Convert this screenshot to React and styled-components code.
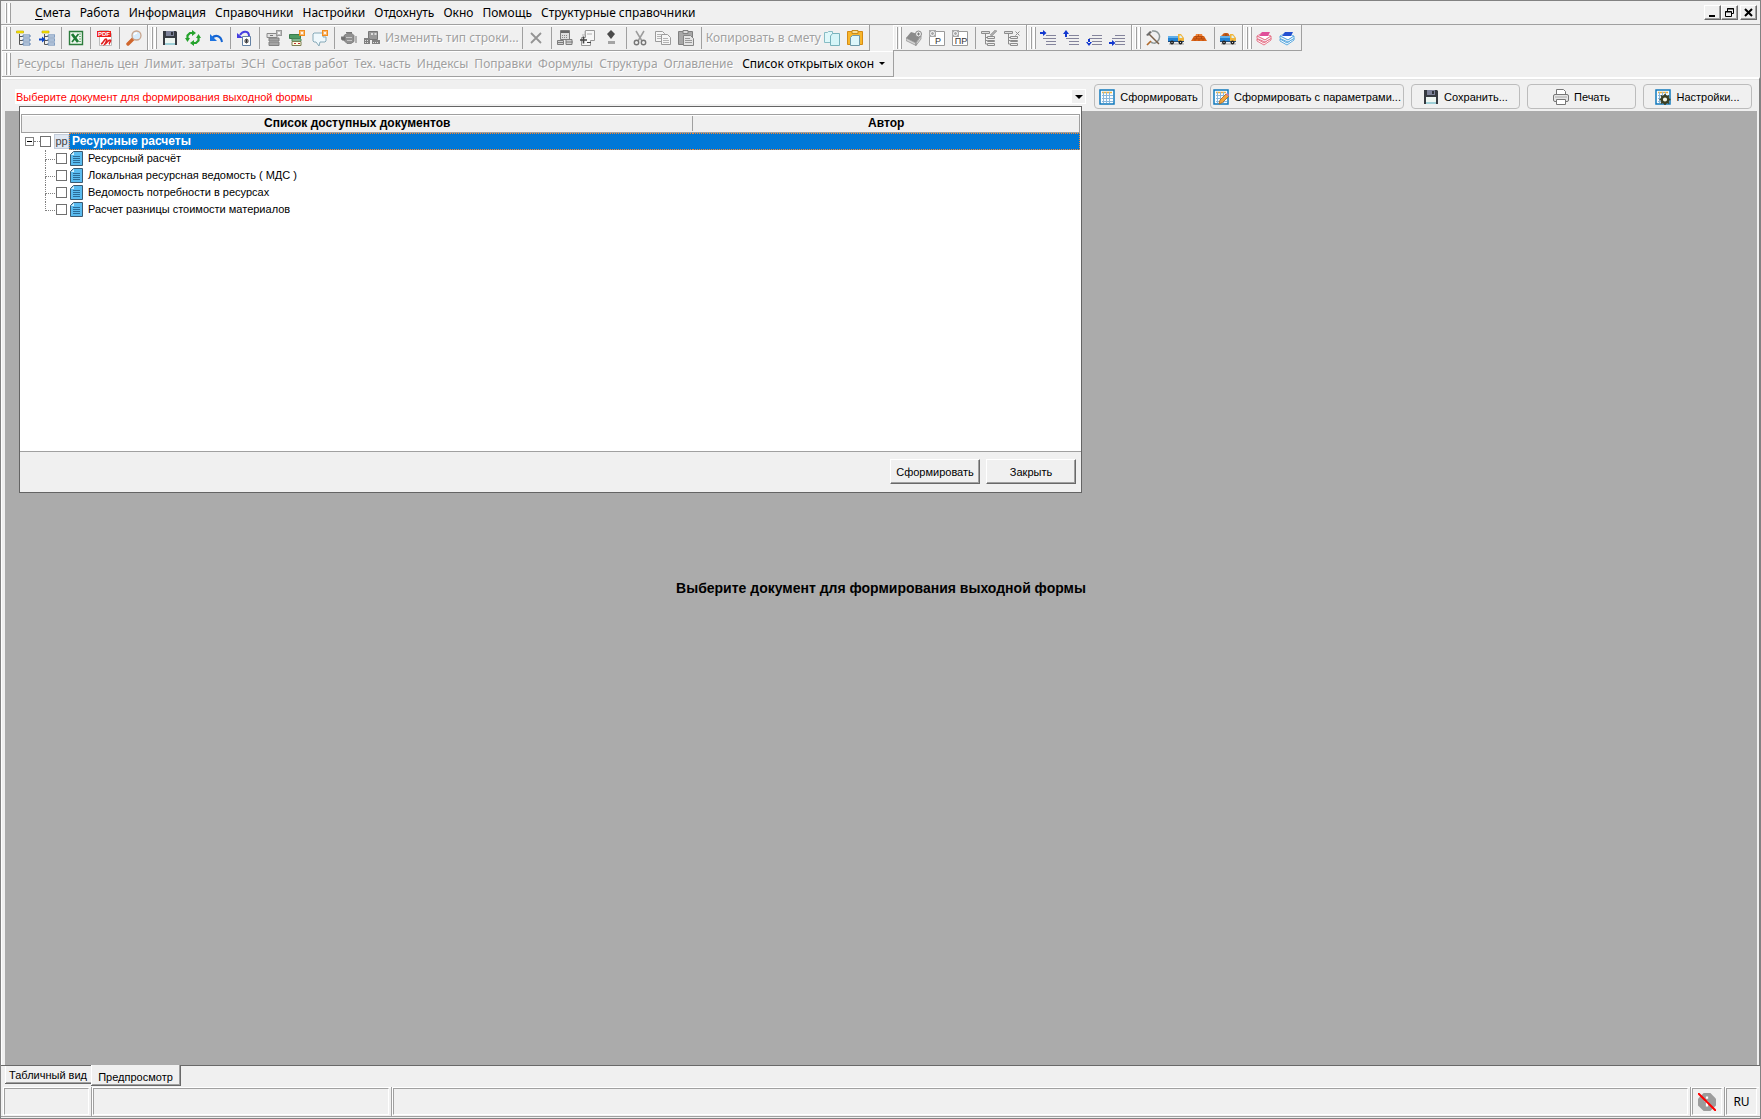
import React from 'react'
import styled, { createGlobalStyle, css } from 'styled-components'

const GlobalStyle = createGlobalStyle`
    * { box-sizing: border-box; }
    body {
        margin: 0;
        background: #f0f0f0;
        color: #000;
        font-family: 'Liberation Sans', Arial, sans-serif;
        font-size: 12px;
    }
    button, input { font: inherit; color: inherit; padding: 0; margin: 0; }
`

const menuFont = css`
    font-family: 'Noto Sans', 'Open Sans', sans-serif;
    font-size: 12px;
    line-height: 16px;
`

const Window = styled.div`
    display: flex;
    flex-direction: column;
    min-height: 100vh;
    padding-bottom: 1px;
    border: 1px solid #828282;
    background: #f0f0f0;
`

/* menu */
const MenuBar = styled.nav`
    ${menuFont}
    display: flex;
    align-items: center;
    height: 24px;
    padding: 0 3px 0 5px;
    border-bottom: 1px solid #a0a0a0;
`
const Grip = styled.span`
    width: 5px;
    align-self: stretch;
    margin: 2px 0 1px;
    border: solid #a0a0a0;
    border-width: 0 1px;
    box-shadow: -1px 0 #fff, inset -2px 0 #fff;
`
const MenuList = styled.div`
    display: flex;
    flex: 1;
    gap: 9px;
    padding-left: 24px;
`
const MenuItem = styled.button`
    border: 0;
    background: none;
    white-space: nowrap;
    u { text-underline-offset: 2px; }
`
const WindowButton = styled.button`
    display: grid;
    place-items: center;
    width: 17px;
    height: 15px;
    margin-left: ${props => (props.$apart ? '2px' : 0)};
    border: 1px solid;
    border-color: #fff #696969 #696969 #fff;
    box-shadow: inset -1px -1px #a0a0a0;
    background: #f0f0f0;
`

/* toolbars */
const ToolRow = styled.div`
    display: flex;
    height: 26px;
    padding-left: 1px;
`
const ToolGroup = styled.div`
    ${menuFont}
    display: flex;
    align-items: center;
    padding: 0 2px 0 4px;
    margin-left: ${props => (props.$apart ? '23px' : 0)};
    border: solid #a0a0a0;
    border-width: 0 1px 1px 0;
    box-shadow: inset 1px 1px #fff;
`
const ToolButton = styled.button`
    display: grid;
    place-items: center;
    width: 23px;
    height: 22px;
    border: 0;
    background: none;
    ${Grip} + & { margin-left: 1px; }
`
const TextButton = styled.button`
    border: 0;
    padding: ${props => (props.$tight ? '0 0 0 2px' : '0 3px')};
    background: none;
    white-space: nowrap;
    color: ${props => (props.disabled ? '#a0a0a0' : '#000')};
    text-shadow: ${props => (props.disabled ? '1px 1px #fff' : 'none')};
`
const Separator = styled.span`
    width: 1px;
    height: 22px;
    margin: 0 2px 0 3px;
    background: #a0a0a0;
`
const PanelLinks = styled.div`
    display: flex;
    padding: 0 3px;
    > :last-child { margin-left: 3px; }
`
const Caret = styled.span`
    display: inline-block;
    margin-left: ${props => (props.$flush ? 0 : '5px')};
    border: solid transparent;
    border-width: ${props => (props.$flush ? '4px 4px 0' : '3px 3px 0')};
    border-top-color: #000;
    vertical-align: 3px;
`

/* work area */
const Main = styled.main`
    display: flex;
    flex: 1;
    flex-direction: column;
    border-top: 2px solid #fff;
    border-right: 1px solid #808080;
    box-shadow: inset 0 1px #e3e3e3, inset 1px 0 #fff;
`
const FormBar = styled.div`
    display: flex;
    align-items: center;
    gap: 7px;
    padding: 5px 7px 2px 14px;
`
const Combo = styled.div`
    position: relative;
    display: flex;
    flex: 1;
    align-items: center;
    height: 15px;
    margin-right: 1px;
    padding-right: 1px;
    background: #fff;
    > input {
        flex: 1;
        border: 0;
        padding: 0 1px;
        background: none;
        color: #f00;
        font-size: 11px;
        outline: none;
    }
    > button {
        display: grid;
        place-items: center;
        width: 13px;
        height: 13px;
        border: 0;
        background: #f0f0f0;
    }
`
const FormButton = styled.button`
    display: flex;
    align-items: center;
    justify-content: center;
    gap: 5px;
    width: ${props => (props.$wide ? '194px' : '109px')};
    height: 25px;
    border: 1px solid #bcbcbc;
    border-radius: 4px;
    background: #f0f0f0;
    white-space: nowrap;
    font-size: 11px;
`
const Preview = styled.section`
    display: flex;
    flex: 1;
    align-items: center;
    justify-content: center;
    margin: 0 2px 0 4px;
    background: #ababab;
    font-size: 14px;
    font-weight: bold;
`

/* drop-down with documents */
const Popup = styled.div`
    position: absolute;
    z-index: 1;
    top: 17px;
    left: 4px;
    right: 4px;
    border: 1px solid #646464;
    background: #f0f0f0;
`
const ListBox = styled.div`
    height: 345px;
    padding: 7px 1px 0;
    border-bottom: 1px solid #a0a0a0;
    background: #fff;
`
const DocTable = styled.table`
    width: 100%;
    border-collapse: separate;
    border-spacing: 0;
    table-layout: fixed;
    font-size: 11px;
    th {
        height: 19px;
        padding: 0;
        border: solid #a0a0a0;
        border-width: 1px 0;
        box-shadow: inset 0 1px #fff;
        background: #f0f0f0;
        font-size: 12px;
    }
    th span {
        display: block;
        line-height: 15px;
    }
    th:first-child { width: 63.5%; border-left-width: 1px; }
    th:first-child span { border-right: 1px solid #a0a0a0; }
    th:last-child { border-right-width: 1px; }
    td { padding: 0; height: 17px; }
`
const TreeRow = styled.div`
    display: flex;
    align-items: center;
    height: 17px;
    padding-left: ${props => (props.$child ? '24px' : '4px')};
    label {
        display: flex;
        flex: 1;
        align-items: center;
        height: 17px;
        white-space: nowrap;
    }
    input {
        appearance: none;
        flex: none;
        width: 11px;
        height: 11px;
        margin-right: 3px;
        border: 1px solid #707070;
        background: #fff;
    }
`
const RowText = styled.span`
    flex: 1;
    line-height: 17px;
    padding-left: ${props => (props.$selected ? '2px' : '5px')};
    ${props => props.$selected && css`
        border: 1px dotted #ff8728;
        border-right: 0;
        line-height: 15px;
        background: #0078d7;
        color: #fff;
        font-weight: bold;
        font-size: 12px;
    `}
`
const SelectedCell = styled.td`
    border: 1px dotted #ff8728;
    border-left: 0;
    background: #0078d7;
`
const Expander = styled.button`
    display: grid;
    place-items: center;
    width: 9px;
    height: 9px;
    border: 1px solid #808080;
    background: #fff;
    &::before {
        content: '';
        width: 5px;
        height: 1px;
        background: #000;
    }
`
const Stub = styled.span`
    width: 6px;
    border-top: 1px dotted #808080;
`
const Branch = styled.span`
    width: 10px;
    height: 17px;
    margin-right: 1px;
    &::before, &::after {
        content: '';
        display: block;
        height: 8px;
        border-left: 1px dotted #808080;
    }
    &::before { height: 9px; border-bottom: 1px dotted #808080; }
    &::after { border-left-color: ${props => (props.$last ? 'transparent' : '#808080')}; }
`
const SectionMark = styled.span`
    width: 15px;
    height: 15px;
    border: 1px solid #c4ccd8;
    background: #dfe7f2;
    color: #444;
    font-size: 11px;
    line-height: 12px;
    text-align: center;
`
const PopupActions = styled.div`
    display: flex;
    justify-content: flex-end;
    gap: 6px;
    padding: 7px 5px 8px;
`
const DialogButton = styled.button`
    width: 90px;
    height: 25px;
    border: 1px solid;
    border-color: #fff #696969 #696969 #fff;
    box-shadow: inset -1px -1px #a0a0a0;
    background: #f0f0f0;
    font-size: 11px;
`

/* bottom */
const Tabs = styled.div`
    display: flex;
    align-items: flex-start;
    height: 22px;
    padding-left: 4px;
    border-top: 1px solid #696969;
`
const Tab = styled.button`
    height: ${props => (props.$active ? '21px' : '18px')};
    margin-top: ${props => (props.$active ? '-1px' : 0)};
    width: ${props => (props.$active ? '90px' : '86px')};
    border: solid #696969;
    border-width: 0 ${props => (props.$active ? '1px' : 0)} 1px 0;
    box-shadow: inset 1px 0 #fff, inset ${props => (props.$active ? '-1px' : 0)} -1px #a0a0a0;
    background: #f0f0f0;
    font-size: 11px;
    padding-top: ${props => (props.$active ? '3px' : 0)};
`
const StatusBar = styled.footer`
    ${menuFont}
    display: flex;
    height: 30px;
    padding: 0 1px 0 2px;
    border-bottom: 1px solid #a0a0a0;
`
const StatusCell = styled.div`
    flex: ${props => (props.$width ? `0 0 ${props.$width}` : '1')};
    padding: 1px;
    border-right: 1px solid #a0a0a0;
    box-shadow: inset 1px 1px #fff;
    &:last-child { border-right: 0; }
    > div {
        display: grid;
        place-items: center;
        height: 27px;
        margin-right: 1px;
        border: 1px solid;
        border-color: #a0a0a0 #fff #fff #a0a0a0;
    }
`

const Svg = ({ children, size = 16 }) => (
    <svg width={size} height={size} viewBox="0 0 16 16" fill="none" aria-hidden="true">
        {children}
    </svg>
)

const TreeLines = () => (
    <>
        <path d="M3.500 4v10.500h4M3.500 6.500h4M3.500 10.500h4" stroke="#555" />
        <path d="M7 5h7v2H7zM7 9h7v2H7zM7 13h7v2H7z" fill="#fff" stroke="#587fae" />
    </>
)
const Lines = () => <path d="M6 5.500h10M3 8.500h13M6 11.500h10M6 14.500h10" stroke="#84849c" />
const Star = ({ x = 10, color = '#f28c1c' }) => (
    <>
        <path d={`M${x} 0h6v6h-6z`} fill={color} />
        <path d={`M${x + 3} 1v4M${x + 1} 3h4M${x + 1.5} 1.500l3 3M${x + 4.5} 1.500l-3 3`} stroke="#fff" strokeWidth=".8" />
    </>
)
const GridSheet = () => (
    <>
        <path d="M1 1h14v14H1z" fill="#f8fcff" stroke="#1179bd" strokeWidth="1.500" />
        <path d="M3 3.500h10" stroke="#f2b33c" strokeWidth="1.500" />
        <path d="M4.500 3v11M7.500 3v11M10.500 3v11M3 6.500h11M3 9.500h11M3 12.500h11" stroke="#8bb8dc" />
    </>
)
const Floppy = () => (
    <>
        <path d="M1 1h13l1 1v13H1z" fill="#363a40" />
        <path d="M4 1h8v5H4z" fill="#7d8299" />
        <path d="M9 2h2v3H9z" fill="#30343c" />
        <path d="M3 8h10v7H3z" fill="#eef6f2" />
        <path d="M3 13h10v2H3z" fill="#9fd0d8" />
    </>
)
const Truck = () => (
    <>
        <path d="M1 14h15" stroke="#c9c9c9" strokeWidth="2" />
        <path d="M0 6h10v6H0z" fill="#2382d2" />
        <path d="M0 6h10v2H0z" fill="#62b0ea" />
        <path d="M0 11h16v1H0z" fill="#234c78" />
        <path d="M10 4h3l3 4v3h-6z" fill="#f1b43a" />
        <path d="M11.500 5.500h1.500l1.500 2.500h-3z" fill="#d8f1fb" />
        <circle cx="4" cy="12.500" r="2" fill="#222" />
        <circle cx="12.500" cy="12.500" r="2" fill="#222" />
        <path d="M3.500 12.500h1M12 12.500h1" stroke="#ddd" />
    </>
)
const Bricks = () => (
    <>
        <path d="M5 4h6l1 3H4z" fill="#ee8238" />
        <path d="M3 6h10l3 5H0z" fill="#dd6417" />
        <path d="M4 6.500h8M2 8.800h12M7.500 4.500v2M5.500 7v2M10.500 7v2M4 9v2M8 9v2M12 9v2" stroke="#a8450c" strokeWidth=".7" />
    </>
)
const Books = ({ top, side }) => (
    <>
        <path d="M1 9l7 4 7-5v2l-7 5-7-4z" fill="#fff" stroke={side} strokeWidth=".9" />
        <path d="M1 6l5-3 9 3-6 4z" fill="#fff" stroke={side} strokeWidth=".7" />
        <path d="M1 6l8 4 6-4v2.500L9 12 1 8.500z" fill="#f4f7fb" stroke={side} strokeWidth=".9" />
        <path d="M6 2h8l-2 4H3z" fill={top} />
    </>
)
const Filter = () => (
    <>
        <path d="M.5 1.500h8v2h-8z" fill="#ddd" stroke="#8c8c8c" />
        <path d="M4.500 4v10h2M4.500 7.500h2M4.500 10.500h2" stroke="#8c8c8c" />
        <path d="M6.500 6.500h7v2h-7zM6.500 10.500h7v1h-7zM6.500 13.500h7v2h-7z" fill="#eee" stroke="#8c8c8c" />
    </>
)
const Gear = () => (
    <>
        <circle cx="10" cy="10.500" r="3.300" stroke="#3c3f22" strokeWidth="2.400" fill="#f6f6e8" />
        <path d="M10 5v2M10 14v2M4.500 10.500h2M13.500 10.500h2M6 6.500l1.500 1.500M12.500 13l1.500 1.500M14 6.500L12.500 8M7.500 13L6 14.500" stroke="#3c3f22" strokeWidth="1.600" />
    </>
)
const Sheet = ({ code }) => (
    <>
        <path d="M.5 1.500h15v14H.5z" fill="#fff" stroke="#9a9a9a" />
        <path d="M0 0h7v7H0z" fill="#aaa" />
        <circle cx="3.500" cy="3.500" r="2" stroke="#fff" />
        <text x="9" y="13.500" fontSize="9" fontFamily="Liberation Sans, sans-serif" textAnchor="middle" fill="#333">{code}</text>
    </>
)

const icons = {
    tree: <><TreeLines /><path d="M.5 1h7v2h-7z" fill="#ffe800" stroke="#b8a400" strokeWidth=".6" /></>,
    treeInsert: (
        <>
            <g transform="translate(2 0)"><TreeLines /><path d="M1 1h7v2H1z" fill="#ffe800" stroke="#b8a400" strokeWidth=".6" /></g>
            <path d="M0 9.500h4" stroke="#0b46c8" strokeWidth="2" />
            <path d="M3 6.500l3.500 3-3.500 3z" fill="#0b46c8" />
        </>
    ),
    excel: (
        <>
            <path d="M1.500 1.500h13v13h-13z" fill="#eef7ee" stroke="#2c7c3c" strokeWidth="1.400" />
            <path d="M11 4h2M11 6.500h2M11 9h2M11 11.500h2" stroke="#6fb07a" />
            <path d="M4 4l6 8" stroke="#1d7a33" strokeWidth="2.800" />
            <path d="M10.500 4l-6.500 8" stroke="#1d7a33" strokeWidth="1.700" />
        </>
    ),
    pdf: (
        <>
            <path d="M2.500.5h9l3 3v12h-12z" fill="#fff" stroke="#bdbdbd" />
            <path d="M0 1h14v6H0z" fill="#ee1c1c" />
            <text x="7" y="6.200" fontSize="6" fontWeight="bold" fontFamily="Liberation Sans, sans-serif" textAnchor="middle" fill="#fff">PDF</text>
            <path d="M4 14c3-1 3-5 5-5s-1 5-1 5c2-1 3-4 5-4s-2 4 0 4" stroke="#e02222" strokeWidth="1.600" />
        </>
    ),
    lens: (
        <>
            <path d="M2 14l5-5" stroke="#d0662c" strokeWidth="3.400" strokeLinecap="round" />
            <circle cx="10.500" cy="5.500" r="4.500" fill="#d8ecfb" stroke="#c8a48c" strokeWidth="1.300" />
            <path d="M8 5c.5-1.500 1.500-2 3-2" stroke="#fff" strokeWidth="1.300" />
        </>
    ),
    save: <Floppy />,
    refresh: (
        <>
            <path d="M2.500 9.500v-4L5 3h3M13.500 6.500v4L11 13H8" stroke="#25a32c" strokeWidth="2.200" />
            <path d="M7 0l4 3-4 3zM9 10l-4 3 4 3z" fill="#25a32c" />
            <path d="M0 8l2.500 4L5 8zM16 8l-2.500-4L11 8z" fill="#25a32c" />
        </>
    ),
    undo: (
        <>
            <path d="M4 8c4-4 9-2 10 4" stroke="#1464d2" strokeWidth="2" />
            <path d="M2 4v7h7z" fill="#1d73e0" />
        </>
    ),
    undoDoc: (
        <>
            <path d="M3 5c3-5 9-4 9 1" stroke="#463fe0" strokeWidth="2" />
            <path d="M0 3v5h6z" fill="#463fe0" />
            <path d="M5.500 6.500h8v9h-8z" fill="#fff" stroke="#6582a4" />
            <path d="M9.500 8.500v5M7 11h5M8 9l3 4M11 9l-3 4" stroke="#222" strokeWidth=".8" />
        </>
    ),
    stackGray: (
        <>
            <path d="M1 3.500h10v4H1z" fill="#e2e2e2" stroke="#8a8a8a" />
            <path d="M3 8h10v3H3zM3 12h10v3.500H3z" fill="#a4a4a4" stroke="#808080" />
            <path d="M4 5.500h3" stroke="#777" />
            <Star color="#9a9a9a" />
        </>
    ),
    stackGreen: (
        <>
            <path d="M.5 4.500h11v4H.5z" fill="#4e9b62" stroke="#3a7b4c" />
            <path d="M3 9h9v2H3z" fill="#b8dcc0" stroke="#4d8c5c" />
            <path d="M3 11.500h9v4H3z" fill="#fffde2" stroke="#7c7c50" />
            <path d="M5 13.500h2M9 13.500h2" stroke="#c03030" />
            <Star />
        </>
    ),
    bubble: (
        <>
            <path d="M2 3h9v4h3v4l-1 1H8l-1 4-3-4H2L1 11V4z" fill="#eff8fc" stroke="#86a9b8" />
            <Star />
        </>
    ),
    engine: (
        <>
            <path d="M3 5.500l3-2h5l2 2v6l-3 2H6l-3-3z" fill="#909090" stroke="#777" strokeWidth=".8" />
            <path d="M0 7h4v3H1zM15 6v7M5 2.500h6" fill="#6f6f6f" stroke="#777" />
            <path d="M5 7.500h6M6 10.500h5" stroke="#d6d6d6" strokeWidth=".8" />
        </>
    ),
    machines: (
        <>
            <path d="M4.500 1.500h9v8h-9z" fill="#999" stroke="#777" />
            <path d="M7 3h2v2H7zM10.500 3h2v2h-2z" fill="#ddd" />
            <path d="M0 8h6v6H0zM8 10h8v4H8z" fill="#808080" />
            <path d="M1 10.500h4M9 12.500h6M1 12.500h4" stroke="#ddd" strokeDasharray="1 1" />
        </>
    ),
    cross: <path d="M3 3l10 10M13 3L3 13" stroke="#949494" strokeWidth="1.800" />,
    calc: (
        <>
            <path d="M3.500.5h9v9h-9z" fill="#ddd" stroke="#7d7d7d" />
            <path d="M4 2h8" stroke="#666" strokeWidth="2" />
            <path d="M5 5.500h6M5 7.500h6" stroke="#888" strokeDasharray="1 1" />
            <path d="M.5 10.500h6v4h-6zM9 9.500h6v5H9z" fill="#d0d0d0" stroke="#7d7d7d" />
            <path d="M0 12.500h7M9 12h7" stroke="#7d7d7d" />
        </>
    ),
    docPlus: (
        <>
            <path d="M5.500.5h9v10h-4v5h-9v-8h4z" fill="#f7f7f7" stroke="#989898" />
            <path d="M7 4h5M5 1v4H2" stroke="#b0b0b0" />
            <path d="M0 10h7M3.500 6.500v7" stroke="#444" strokeWidth="1.600" />
            <path d="M7 12.500h4" stroke="#444" />
        </>
    ),
    plusMinus: (
        <>
            <path d="M8 0l4 4-4 5-4-5z" fill="#4b4b4b" />
            <path d="M5 11h7v3H5z" fill="#a4a4a4" />
        </>
    ),
    cut: (
        <>
            <path d="M4 1l6 10M12 1L6 11" stroke="#9c9c9c" strokeWidth="1.500" />
            <circle cx="4.500" cy="12.500" r="2.200" stroke="#777" strokeWidth="1.400" />
            <circle cx="11.500" cy="12.500" r="2.200" stroke="#777" strokeWidth="1.400" />
        </>
    ),
    copy: (
        <>
            <path d="M.5 1.500h7l2 2v8h-9z" fill="#f6f6f6" stroke="#9b9b9b" />
            <path d="M6.500 4.500h6l3 3v7h-9z" fill="#f6f6f6" stroke="#9b9b9b" />
            <path d="M2 4.500h4M2 6.500h4M2 8.500h4M8 8.500h5M8 10.500h6M8 12.500h6" stroke="#b4b4b4" />
        </>
    ),
    paste: (
        <>
            <path d="M.5 1.500h14v13H.5z" fill="#a8a8a8" stroke="#808080" />
            <path d="M5 .5h5v3H5z" fill="#ddd" stroke="#808080" />
            <path d="M5.500 5.500h7l3 3v7h-10z" fill="#e4e4e4" stroke="#858585" />
            <path d="M7 8.500h5M7 10.500h7M7 12.500h7" stroke="#999" />
        </>
    ),
    copyColor: (
        <>
            <path d="M.5 2.500h3l1-1h4v11h-8z" fill="#dff8fa" stroke="#86bcc4" />
            <path d="M6.500 6l2-2.500h7v12h-9z" fill="#d6f5f8" stroke="#78b2bc" />
        </>
    ),
    pasteColor: (
        <>
            <path d="M.5 1.500h15v13H.5z" fill="#f8b62c" stroke="#d58b14" />
            <path d="M5 .5h6v3H5z" fill="#fbe098" stroke="#c58a1c" />
            <path d="M3.500 7.500l2-2h7v10h-9z" fill="#ddf6fa" stroke="#6d98a8" />
        </>
    ),
    bookGray: (
        <>
            <path d="M0 8l5-6 10 3-5 8z" fill="#8b8b8b" />
            <path d="M0 8l10 5v2.500l-10-5zM10 13l5-7v3l-5 6.500z" fill="#d5d5d5" stroke="#888" strokeWidth=".7" />
            <circle cx="12.500" cy="4" r="3" fill="#eee" stroke="#888" />
            <path d="M11 4h3M12.500 2.500v3" stroke="#777" />
        </>
    ),
    sheetP: <Sheet code="Р" />,
    sheetPR: <Sheet code="ПР" />,
    filterEdit: <><Filter /><path d="M9 5l5-5 2 1-5 5z" fill="#aaa" stroke="#888" strokeWidth=".5" /></>,
    filterClear: <><Filter /><path d="M11.500 1.500l4 4M15.500 1.500l-4 4" stroke="#8c8c8c" /></>,
    lineTop: <><Lines /><path d="M0 2h5v2H0zM3 0l3.500 3L3 6z" fill="#1238cf" /></>,
    lineUp: <><Lines /><path d="M2 3h2v4H2zM0 4l3-4 3 4z" fill="#1238cf" /></>,
    lineDown: <><Lines /><path d="M2 9h2v4H2zM0 12l3 4 3-4z" fill="#1238cf" /></>,
    lineBottom: <><Lines /><path d="M0 12h5v2H0zM3 10l3.500 3L3 16z" fill="#1238cf" /></>,
    sickle: (
        <>
            <path d="M7 1c7-1 10 6 5 11-2 2-5 1-6 0" stroke="#8d9797" strokeWidth="1.500" />
            <path d="M4 4l10 10" stroke="#7a6048" strokeWidth="1.500" />
            <path d="M1 5l4-4 2 1-4 4z" fill="#6d6d6d" />
            <path d="M6 11l-4 4" stroke="#b06a2c" strokeWidth="1.700" />
        </>
    ),
    truck: <Truck />,
    bricks: <Bricks />,
    truckLoad: <><Truck /><path d="M1 6l3-3h4l2 3z" fill="#d96a25" /><path d="M3 5h6M6 3v3" stroke="#8c3c10" strokeWidth=".7" /></>,
    booksPink: <Books top="#e0509a" side="#e4657c" />,
    booksBlue: <Books top="#2450d0" side="#4aa0dc" />,
    form: <GridSheet />,
    formEdit: (
        <>
            <GridSheet />
            <path d="M6 15l1-4 6-6 2.500 2.500-6 6z" fill="#f3a63c" stroke="#a8641c" strokeWidth=".8" />
            <path d="M13 5l1-1 2 2-1 1.500z" fill="#d77aa8" />
        </>
    ),
    print: (
        <>
            <path d="M3.500.5h7l2 2v4h-9z" fill="#fff" stroke="#777" />
            <rect x=".5" y="5.500" width="15" height="7" rx="1.500" fill="#e6e6e6" stroke="#777" />
            <path d="M2 8h12" stroke="#aaa" />
            <path d="M3.500 10.500h9v5h-9z" fill="#fff" stroke="#777" />
        </>
    ),
    settings: <><GridSheet /><Gear /></>,
}

const groups = [
    ['tree', 'treeInsert', '|', 'excel', '|', 'pdf', '|', 'lens'],
    [
        'save', 'refresh', 'undo', '|', 'undoDoc', '|', 'stackGray', 'stackGreen', 'bubble', '|',
        'engine', 'machines', { text: 'Изменить тип строки...' }, '|', 'cross', '|',
        'calc', 'docPlus', 'plusMinus', '|', 'cut', 'copy', 'paste', '|',
        { text: 'Копировать в смету' }, 'copyColor', 'pasteColor',
    ],
    ['bookGray', 'sheetP', 'sheetPR', '|', 'filterEdit', 'filterClear'],
    ['lineTop', 'lineUp', 'lineDown', 'lineBottom'],
    ['sickle', 'truck', 'bricks', '|', 'truckLoad'],
    ['booksPink', 'booksBlue'],
]

const menu = ['Работа', 'Информация', 'Справочники', 'Настройки', 'Отдохнуть', 'Окно', 'Помощь', 'Структурные справочники']

const panels = [
    'Ресурсы', 'Панель цен', 'Лимит. затраты', 'ЭСН', 'Состав работ', 'Тех. часть',
    'Индексы', 'Поправки', 'Формулы', 'Структура', 'Оглавление',
]

const documents = [
    'Ресурсный расчёт',
    'Локальная ресурсная ведомость ( МДС )',
    'Ведомость потребности в ресурсах',
    'Расчет разницы стоимости материалов',
]

const formActions = [
    { icon: 'form', text: 'Сформировать' },
    { icon: 'formEdit', text: 'Сформировать с параметрами...', wide: true },
    { icon: 'save', text: 'Сохранить...' },
    { icon: 'print', text: 'Печать' },
    { icon: 'settings', text: 'Настройки...' },
]

const Tool = ({ item }) => {
    if (item === '|') return <Separator />
    if (item.text) return <TextButton type="button" disabled $tight>{item.text}</TextButton>
    return (
        <ToolButton type="button" aria-label={item}>
            <Svg>{icons[item]}</Svg>
        </ToolButton>
    )
}

const DocIcon = () => (
    <svg width="13" height="15" viewBox="0 0 13 15" fill="none" aria-hidden="true">
        <path d="M3.500.5h9v14H.5v-11z" fill="#5bbcf0" stroke="#3c5a70" />
        <path d="M1 4h3V1z" fill="#d9f1fc" />
        <path d="M3 5.500h7M3 7.500h7M3 9.500h7M3 11.500h7" stroke="#2b6c98" />
    </svg>
)

const DocumentPopup = () => (
    <Popup>
        <ListBox>
            <DocTable>
                <thead>
                    <tr>
                        <th><span>Список доступных документов</span></th>
                        <th><span>Автор</span></th>
                    </tr>
                </thead>
                <tbody>
                    <tr>
                        <td>
                            <TreeRow>
                                <Expander type="button" aria-label="Ресурсные расчеты" />
                                <Stub />
                                <label>
                                    <input type="checkbox" />
                                    <SectionMark>рр</SectionMark>
                                    <RowText $selected>Ресурсные расчеты</RowText>
                                </label>
                            </TreeRow>
                        </td>
                        <SelectedCell />
                    </tr>
                    {documents.map((name, i) => (
                        <tr key={name}>
                            <td>
                                <TreeRow $child>
                                    <Branch $last={i === documents.length - 1} />
                                    <label>
                                        <input type="checkbox" />
                                        <DocIcon />
                                        <RowText>{name}</RowText>
                                    </label>
                                </TreeRow>
                            </td>
                            <td />
                        </tr>
                    ))}
                </tbody>
            </DocTable>
        </ListBox>
        <PopupActions>
            <DialogButton type="button">Сформировать</DialogButton>
            <DialogButton type="button">Закрыть</DialogButton>
        </PopupActions>
    </Popup>
)

const App = () => (
    <>
        <GlobalStyle />
        <Window>
            <MenuBar>
                <Grip />
                <MenuList>
                    <MenuItem type="button"><u>С</u>мета</MenuItem>
                    {menu.map(name => <MenuItem type="button" key={name}>{name}</MenuItem>)}
                </MenuList>
                <WindowButton type="button" aria-label="Свернуть">
                    <svg width="11" height="11" viewBox="0 0 11 11"><path d="M2 8h6v2H2z" /></svg>
                </WindowButton>
                <WindowButton type="button" aria-label="Восстановить">
                    <svg width="11" height="11" viewBox="0 0 11 11" fill="none" stroke="#000">
                        <path d="M3.500 4V1.500h6v5H8M3 2h7M1.500 4.500h6v5h-6zM1 5h7" />
                    </svg>
                </WindowButton>
                <WindowButton type="button" aria-label="Закрыть окно" $apart>
                    <svg width="11" height="11" viewBox="0 0 11 11" stroke="#000" strokeWidth="2"><path d="M2 2l7 7M9 2L2 9" /></svg>
                </WindowButton>
            </MenuBar>
            <ToolRow>
                {groups.map((items, g) => (
                    <ToolGroup key={g} $apart={g === 2}>
                        <Grip />
                        {items.map((item, i) => <Tool key={i} item={item} />)}
                    </ToolGroup>
                ))}
            </ToolRow>
            <ToolRow>
                <ToolGroup>
                    <Grip />
                    <PanelLinks>
                        {panels.map(name => <TextButton type="button" key={name} disabled>{name}</TextButton>)}
                        <TextButton type="button">Список открытых окон<Caret /></TextButton>
                    </PanelLinks>
                </ToolGroup>
            </ToolRow>
            <Main>
                <FormBar>
                    <Combo>
                        <input readOnly aria-label="Документ" defaultValue="Выберите документ для формирования выходной формы" />
                        <button type="button" aria-label="Открыть список"><Caret $flush /></button>
                        <DocumentPopup />
                    </Combo>
                    {formActions.map(({ icon, text, wide }) => (
                        <FormButton type="button" key={text} $wide={wide}>
                            <Svg>{icons[icon]}</Svg>
                            {text}
                        </FormButton>
                    ))}
                </FormBar>
                <Preview>Выберите документ для формирования выходной формы</Preview>
            </Main>
            <Tabs>
                <Tab type="button">Табличный вид</Tab>
                <Tab type="button" $active>Предпросмотр</Tab>
            </Tabs>
            <StatusBar>
                <StatusCell $width="89px"><div /></StatusCell>
                <StatusCell $width="300px"><div /></StatusCell>
                <StatusCell><div /></StatusCell>
                <StatusCell $width="34px">
                    <div>
                        <Svg size={18}>
                            <path d="M5 0h6l5 5v6l-5 5H5l-5-5V5z" fill="#9c9c9c" />
                            <path d="M7 3h2v2H7zM6 7h3v5H7V8H6z" fill="#fff" />
                            <path d="M0 0l16 16" stroke="#f00" strokeWidth="1.800" />
                        </Svg>
                    </div>
                </StatusCell>
                <StatusCell $width="34px"><div>RU</div></StatusCell>
            </StatusBar>
        </Window>
    </>
)

export default App
